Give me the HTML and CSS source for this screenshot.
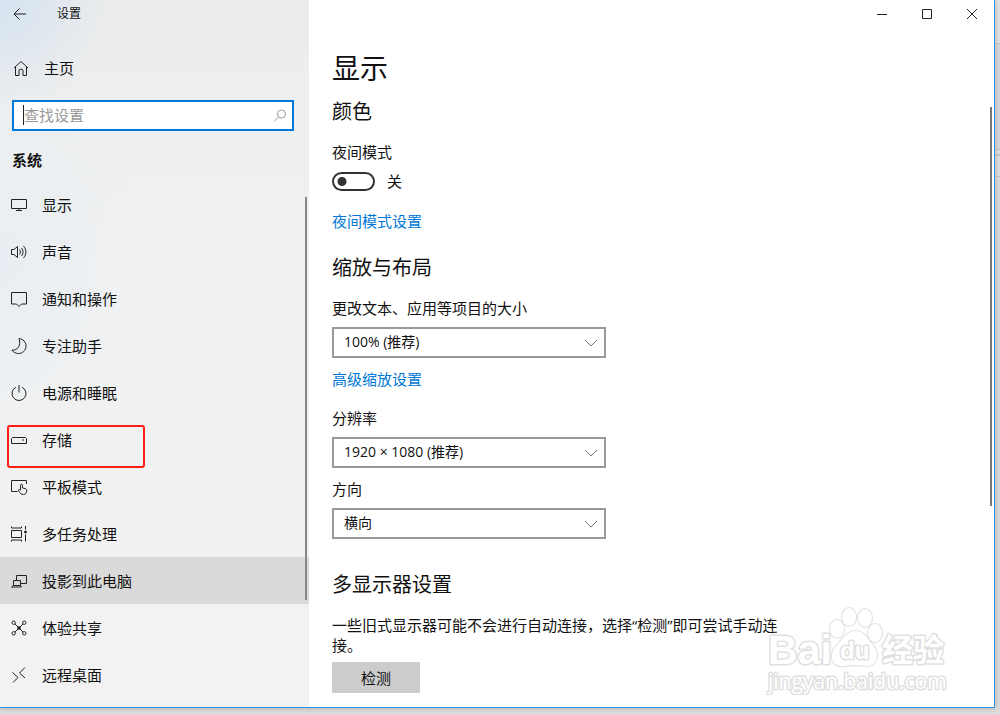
FILE: index.html
```
<!DOCTYPE html>
<html lang="zh-CN">
<head>
<meta charset="utf-8">
<meta name="viewport" content="width=device-width, initial-scale=1">
<title>设置</title>
<link rel="stylesheet" href="styles.css">
</head>
<body>
<div class="window">
  <aside class="sidebar">
    <header class="titlebar">
      <button class="back" aria-label="返回"><svg class="icon-back" viewBox="0 0 14 14"><path d="M13 7H1.500M6.500 1.500L1 7l5.500 5.500"/></svg></button>
      <span class="app-name">设置</span>
    </header>
    <a class="home" href="#"><svg class="icon" viewBox="0 0 18 18"><path d="M2 9l7-6.500L16 9M3.500 8v8.500H7V11q2-2 4 0v5.500h3.500V8"/></svg>主页</a>
    <div class="search">
      <input class="search-input" type="text" placeholder="查找设置" aria-label="查找设置">
      <span class="caret"></span>
      <svg class="search-icon" viewBox="0 0 14 14"><circle cx="8.500" cy="5" r="4"/><path d="M5.500 8L1 12.500"/></svg>
    </div>
    <h2 class="group">系统</h2>
    <nav class="nav">
      <a class="item" href="#"><svg class="icon" viewBox="0 0 18 18"><path d="M1.500 3.500h15v9h-15zM9 12.500v2M6 14.500h6"/></svg>显示</a>
      <a class="item" href="#"><svg class="icon" viewBox="0 0 18 18"><path d="M1.500 6.500H4L7.500 3.500v11L4 11.500H1.500zM9.500 6.500c1.200 1.500 1.200 3.500 0 5M11.500 5c2 2.500 2 5.500 0 8M13.500 3c3.200 3.500 3.200 8.500 0 12"/></svg>声音</a>
      <a class="item" href="#"><svg class="icon" viewBox="0 0 18 18"><path d="M1.500 2.500h15v11.500h-5L9 16.500 6.500 14h-5z"/></svg>通知和操作</a>
      <a class="item" href="#"><svg class="icon" viewBox="0 0 18 18"><path d="M9 1.500c4 .5 7 3.500 7 7.500 0 4.500-3.500 7.500-7.500 7.500-3 0-5.500-1.500-6.500-3.500 5.500 1 9.500-5 7-11.500z"/></svg>专注助手</a>
      <a class="item" href="#"><svg class="icon" viewBox="0 0 18 18"><path d="M9 1v7.500M6 3.200a7 7 0 1 0 6 0"/></svg>电源和睡眠</a>
      <a class="item marked" href="#"><svg class="icon" viewBox="0 0 18 18"><path d="M2.500 6.500h13l1 1v5h-15v-5zM12 9h2"/></svg>存储</a>
      <a class="item" href="#"><svg class="icon" viewBox="0 0 18 18"><path d="M7.500 13.500h-6v-11h15V6M10.500 12V7.200c0-1.300 2-1.300 2 0V10l3 .7c1 .3 1.500 1 1.300 2-.4 2.300-1 3.800-3.300 3.800-2.500 0-3.500-1.500-5-3.800-.4-1.200 1-1.500 2-.7z"/></svg>平板模式</a>
      <a class="item" href="#"><svg class="icon" viewBox="0 0 18 18"><path d="M1.500 5.500h10v7h-10zM1.500 1.500V3h10V1.500M1.500 16.500V15h10v1.500M15.500 1v3.500M15.500 9.500v7"/><circle class="solid" cx="15.500" cy="7" r="1"/></svg>多任务处理</a>
      <a class="item current" href="#"><svg class="icon" viewBox="0 0 18 18"><path d="M6.500 8.500v-5h10v8h-6M3.500 8.500h7v5h-7zM3.500 13.500l-2 1.500h10l-1-1.500"/></svg>投影到此电脑</a>
      <a class="item" href="#"><svg class="icon" viewBox="0 0 18 18"><path d="M5 5l8 8M13 5l-8 8"/><circle cx="3.700" cy="3.700" r="1.700"/><circle cx="14.300" cy="3.700" r="1.700"/><circle cx="3.700" cy="14.300" r="1.700"/><circle cx="14.300" cy="14.300" r="1.700"/><circle class="solid" cx="9" cy="9" r="1.300"/></svg>体验共享</a>
      <a class="item" href="#"><svg class="icon" viewBox="0 0 18 18"><path d="M2.500 6.500L8 11.500 3 16.500M15 1.500L9.500 7l5.500 5"/></svg>远程桌面</a>
    </nav>
    <span class="side-thumb"></span>
  </aside>
  <main class="main">
    <div class="controls">
      <button class="control" aria-label="最小化"><svg viewBox="0 0 12 12"><path d="M1 6.500h10"/></svg></button>
      <button class="control" aria-label="最大化"><svg viewBox="0 0 12 12"><path d="M1.500 1.500h9v9h-9z"/></svg></button>
      <button class="control" aria-label="关闭"><svg viewBox="0 0 12 12"><path d="M1 1l10 10M11 1L1 11"/></svg></button>
    </div>
    <div class="content">
      <h1 class="title">显示</h1>
      <section class="section">
        <h2 class="heading">颜色</h2>
        <label class="label" for="night">夜间模式</label>
        <div class="toggle-row"><input class="toggle" type="checkbox" role="switch" id="night"><span>关</span></div>
        <a class="link night-link" href="#">夜间模式设置</a>
      </section>
      <section class="section scale">
        <h2 class="heading">缩放与布局</h2>
        <label class="label" for="scale">更改文本、应用等项目的大小</label>
        <div class="field"><select class="select" id="scale"><option>100% (推荐)</option></select><svg class="chevron" viewBox="0 0 12 8"><path d="M0 1l6 6 6-6"/></svg></div>
        <a class="link" href="#">高级缩放设置</a>
        <label class="label" for="resolution">分辨率</label>
        <div class="field"><select class="select" id="resolution"><option>1920 × 1080 (推荐)</option></select><svg class="chevron" viewBox="0 0 12 8"><path d="M0 1l6 6 6-6"/></svg></div>
        <label class="label direction" for="direction">方向</label>
        <div class="field"><select class="select" id="direction"><option>横向</option></select><svg class="chevron" viewBox="0 0 12 8"><path d="M0 1l6 6 6-6"/></svg></div>
      </section>
      <section class="section displays">
        <h2 class="heading">多显示器设置</h2>
        <p class="note">一些旧式显示器可能不会进行自动连接，选择“检测”即可尝试手动连接。</p>
        <button class="detect">检测</button>
      </section>
    </div>
    <span class="main-thumb"></span>
    <svg class="watermark" viewBox="0 0 184 92">
      <text class="brand" x="2" y="61">Bai</text>
      <g class="paw">
        <ellipse cx="71" cy="26" rx="7" ry="9"/><ellipse cx="83" cy="14" rx="7" ry="9"/><ellipse cx="99" cy="15" rx="7" ry="9"/><ellipse cx="109" cy="30" rx="7" ry="9"/>
        <path d="M90 28c8 0 11 7 16 13 7 7 8 21-5 22-8 0-13-2-22 0-13 2-17-10-9-20 7-7 11-15 20-15z"/>
      </g>
      <text class="du" x="74" y="56">du</text>
      <text class="brand-cn" x="116" y="58">经验</text>
      <text class="site" x="2" y="86">jingyan.baidu.com</text>
    </svg>
  </main>
</div>
</body>
</html>
```
FILE: styles.css
```
*, *::before, *::after { box-sizing: border-box; }

body {
  margin: 0;
  min-height: 100vh;
  display: flex;
  padding: 0 5px 7px 0;
  background: linear-gradient(#e4e4e4 43px, #c4c4c4 43px 44px, #d8d8dc 44px 149px, #c4c4c4 149px 150px, #e0e0e0 150px 154px, #c4c4c4 154px 156px, #e0e0e0 156px 176px, #c4c4c4 176px 177px, #dcdcdc 177px);
  color: #111;
  font: 15px/20px "Open Sans", "Noto Sans CJK SC", sans-serif;
}

h1, h2, p { margin: 0; font-weight: 400; }
a { color: inherit; text-decoration: none; }
button { padding: 0; border: 0; background: none; color: inherit; font: inherit; }
svg { fill: none; stroke: #222; stroke-width: 1; display: block; }

.window {
  flex: 1;
  display: flex;
  background: #fff;
  border: solid #2f8fe0;
  border-width: 0 1px 1px 0;
  box-shadow: 0 0 6px #aaa;
}

.sidebar {
  position: relative;
  flex: none;
  width: 309px;
  background:
    radial-gradient(circle at 0 0, #d5e3f0, transparent 110px),
    radial-gradient(ellipse at 0 260px, #e8eef3, transparent 150px),
    linear-gradient(#ebecec, #f1f1f1 35%, #f2f2f2);
}

.titlebar { display: flex; align-items: center; height: 28px; padding-left: 13px; gap: 30px; }
.app-name { font-size: 12px; }
.back { width: 14px; }
.icon-back { width: 14px; height: 14px; }
.icon { flex: none; width: 18px; height: 18px; }
.solid { fill: #222; }

.home { display: flex; align-items: center; gap: 14px; height: 38px; margin-top: 21px; padding-left: 12px; }

.search { position: relative; margin: 13px 15px 0 12px; }
.search-input {
  display: block;
  width: 100%;
  height: 31px;
  padding: 0 36px 2px 10px;
  border: 2px solid #0078d7;
  border-radius: 0;
  background: #fff;
  font: inherit;
  outline: none;
}
.search-input::placeholder { color: #999; opacity: 1; }
.caret { position: absolute; left: 11px; top: 5px; width: 1px; height: 20px; background: #222; }
.search-icon { position: absolute; right: 7px; top: 9px; width: 14px; height: 14px; stroke: #999; }

.group { margin: 19px 12px 11px; font-size: 15px; font-weight: 700; }

.item { position: relative; display: flex; align-items: center; gap: 14px; height: 47px; padding-left: 10px; }
.current { background: #dadada; }
.marked::after {
  content: "";
  position: absolute;
  left: 7px;
  top: 9px;
  width: 138px;
  height: 43px;
  border: 2px solid #fb1f14;
  border-radius: 3px;
}
.side-thumb { position: absolute; right: 2px; top: 197px; width: 2px; height: 403px; background: #868686; }

.main { position: relative; flex: 1; min-width: 0; }
.controls { display: flex; justify-content: flex-end; height: 28px; }
.control { display: grid; place-items: center; width: 45px; height: 28px; }
.control svg { width: 12px; height: 12px; }

.content { padding: 22px 24px 13px 23px; }
.title { font-size: 28px; line-height: 36px; margin-bottom: 12px; }
.section { display: flex; flex-direction: column; align-items: flex-start; }
.heading { font-size: 20px; line-height: 28px; margin-bottom: 16px; }
.scale { margin-top: 23px; }
.displays { margin-top: 32px; }

.toggle-row { display: flex; align-items: center; gap: 12px; margin-top: 9px; }
.toggle {
  appearance: none;
  width: 43px;
  height: 19px;
  margin: 0;
  border: 2px solid #333;
  border-radius: 10px;
  background: radial-gradient(circle at 8px 50%, #333 4px, transparent 5px);
}
.link { color: #0078d7; }
.night-link { margin-top: 20px; }

.field { position: relative; width: 274px; max-width: 100%; margin-top: 9px; }
.select {
  appearance: none;
  display: block;
  width: 100%;
  height: 31px;
  padding: 0 32px 2px 10px;
  border: 2px solid #999;
  border-radius: 0;
  background: #fff;
  color: inherit;
  font: inherit;
  font-size: 14px;
}
.chevron { position: absolute; right: 9px; top: 12px; width: 12px; height: 8px; stroke: #777; }
.field + .link { margin-top: 11px; }
.link + .label { margin-top: 19px; }
.direction { margin-top: 11px; }

.note { max-width: 450px; }
.detect { width: 88px; height: 31px; margin-top: 7px; background: #ccc; }

.main-thumb { position: absolute; right: 2px; top: 107px; width: 2px; height: 399px; background: #777; }

.watermark {
  position: absolute;
  right: 44px;
  bottom: 12px;
  width: 184px;
  height: 92px;
  fill: #fff;
  stroke: #e0e0e0;
  stroke-width: 3px;
  stroke-linejoin: round;
  paint-order: stroke;
  pointer-events: none;
}
.paw { stroke-width: 2px; }
.brand { font: 700 41px "Liberation Sans", sans-serif; }
.du { font: 700 24px "Liberation Sans", sans-serif; }
.brand-cn { font: 700 31px "Noto Sans CJK SC", sans-serif; }
.site { font: 21px "Open Sans", sans-serif; }
```
